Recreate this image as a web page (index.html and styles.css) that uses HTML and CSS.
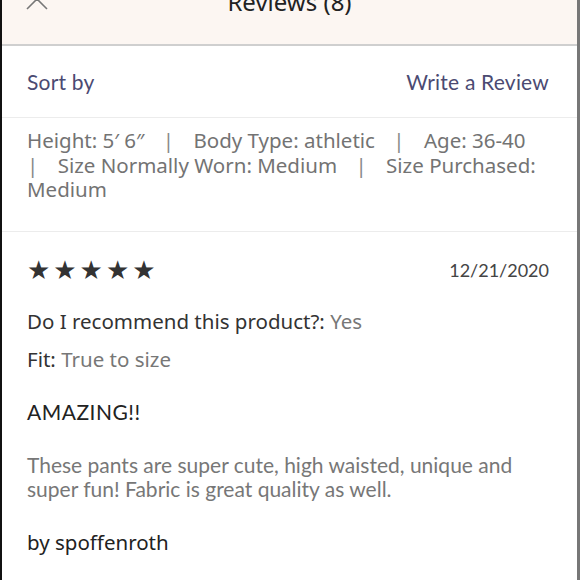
FILE: index.html
```html
<!DOCTYPE html>
<html lang="en">
<head>
    <meta charset="UTF-8">
    <meta name="viewport" content="width=device-width, initial-scale=1.0">
    <title>Reviews (8)</title>
    <link rel="stylesheet" href="styles.css">
</head>
<body>
    <div class="sheet">
        <div class="sheet-header">
            <span class="close-btn">
                <svg width="26" height="26" viewBox="0 0 26 26">
                    <path d="M3 3 L23 23 M23 3 L3 23" stroke="#777" stroke-width="1.6" fill="none"/>
                </svg>
            </span>
            <h1>Reviews (8)</h1>
        </div>

        <div class="toolbar">
            <a href="#" class="link">Sort by</a>
            <a href="#" class="link">Write a Review</a>
        </div>

        <div class="profile">
            <span class="item">Height: 5′ 6″</span> <span class="sep">|</span> <span class="item">Body Type: athletic</span> <span class="sep">|</span> <span class="item">Age: 36-40</span> <span class="sep">|</span> <span class="item">Size Normally Worn: Medium</span> <span class="sep">|</span> Size Purchased: Medium
        </div>

        <div class="review">
            <div class="review-top">
                <div class="stars">★★★★★</div>
                <div class="date">12/21/2020</div>
            </div>
            <p class="field first"><span class="label">Do I recommend this product?:</span> <span class="value">Yes</span></p>
            <p class="field"><span class="label">Fit:</span> <span class="value">True to size</span></p>
            <h2 class="review-title">AMAZING!!</h2>
            <p class="review-text">These pants are super cute, high waisted, unique and super fun! Fabric is great quality as well.</p>
            <p class="author">by spoffenroth</p>
        </div>
    </div>
</body>
</html>
```

FILE: styles.css
```css
body {
    margin: 0;
    padding: 0;
    background: #fff;
    font-family: 'Noto Sans', sans-serif;
}
.sheet {
    height: 580px;
    overflow: hidden;
    border-left: 2px solid #111;
    border-right: 3px solid #777;
    box-sizing: border-box;
    background: #fff;
}
.sheet-header {
    height: 44px;
    background-color: #fcf6f2;
    border-bottom: 2px solid #cfcfcf;
    position: relative;
    display: flex;
    justify-content: center;
    align-items: flex-start;
}
.sheet-header h1 {
    margin: -15px 0 0;
    font-weight: normal;
    font-size: 24px;
    color: #222;
}
.close-btn {
    position: absolute;
    left: 22px;
    top: -14px;
}
.toolbar {
    display: flex;
    justify-content: space-between;
    align-items: center;
    padding: 0 28px 0 25px;
    height: 71px;
    border-bottom: 1px solid #ececec;
}
.link {
    font-family: 'Lato', sans-serif;
    font-size: 21px;
    color: #4b4a72;
    text-decoration: none;
    letter-spacing: 0.2px;
}
.profile {
    padding: 10px 24px 29px 25px;
    font-size: 20.5px;
    line-height: 24.5px;
    color: #737373;
    border-bottom: 1px solid #ececec;
}
.item {
    margin-right: 13px;
}
.sep {
    margin-right: 14px;
    color: #888;
}
.review {
    padding: 24px 28px 0 25px;
}
.review-top {
    display: flex;
    justify-content: space-between;
    align-items: center;
    height: 28px;
}
.stars {
    font-family: 'DejaVu Sans', sans-serif;
    font-size: 26px;
    line-height: 28px;
    color: #333;
    letter-spacing: 3px;
}
.date {
    font-family: 'Lato', sans-serif;
    font-size: 18px;
    color: #444;
}
.field {
    margin: 10px 0 0;
    font-size: 20.5px;
    line-height: 28px;
}
.field.first {
    margin-top: 23px;
}
.label {
    color: #333;
}
.value {
    color: #777;
}
.review-title {
    margin: 25px 0 0;
    font-family: 'Lato', sans-serif;
    font-weight: normal;
    font-size: 21px;
    line-height: 28px;
    color: #222;
    letter-spacing: 0.5px;
}
.review-text {
    margin: 27px 0 0;
    font-family: 'Lato', sans-serif;
    font-size: 21px;
    line-height: 24.5px;
    color: #777;
}
.author {
    margin: 26px 0 0;
    font-size: 20.5px;
    line-height: 28px;
    color: #222;
}
```
